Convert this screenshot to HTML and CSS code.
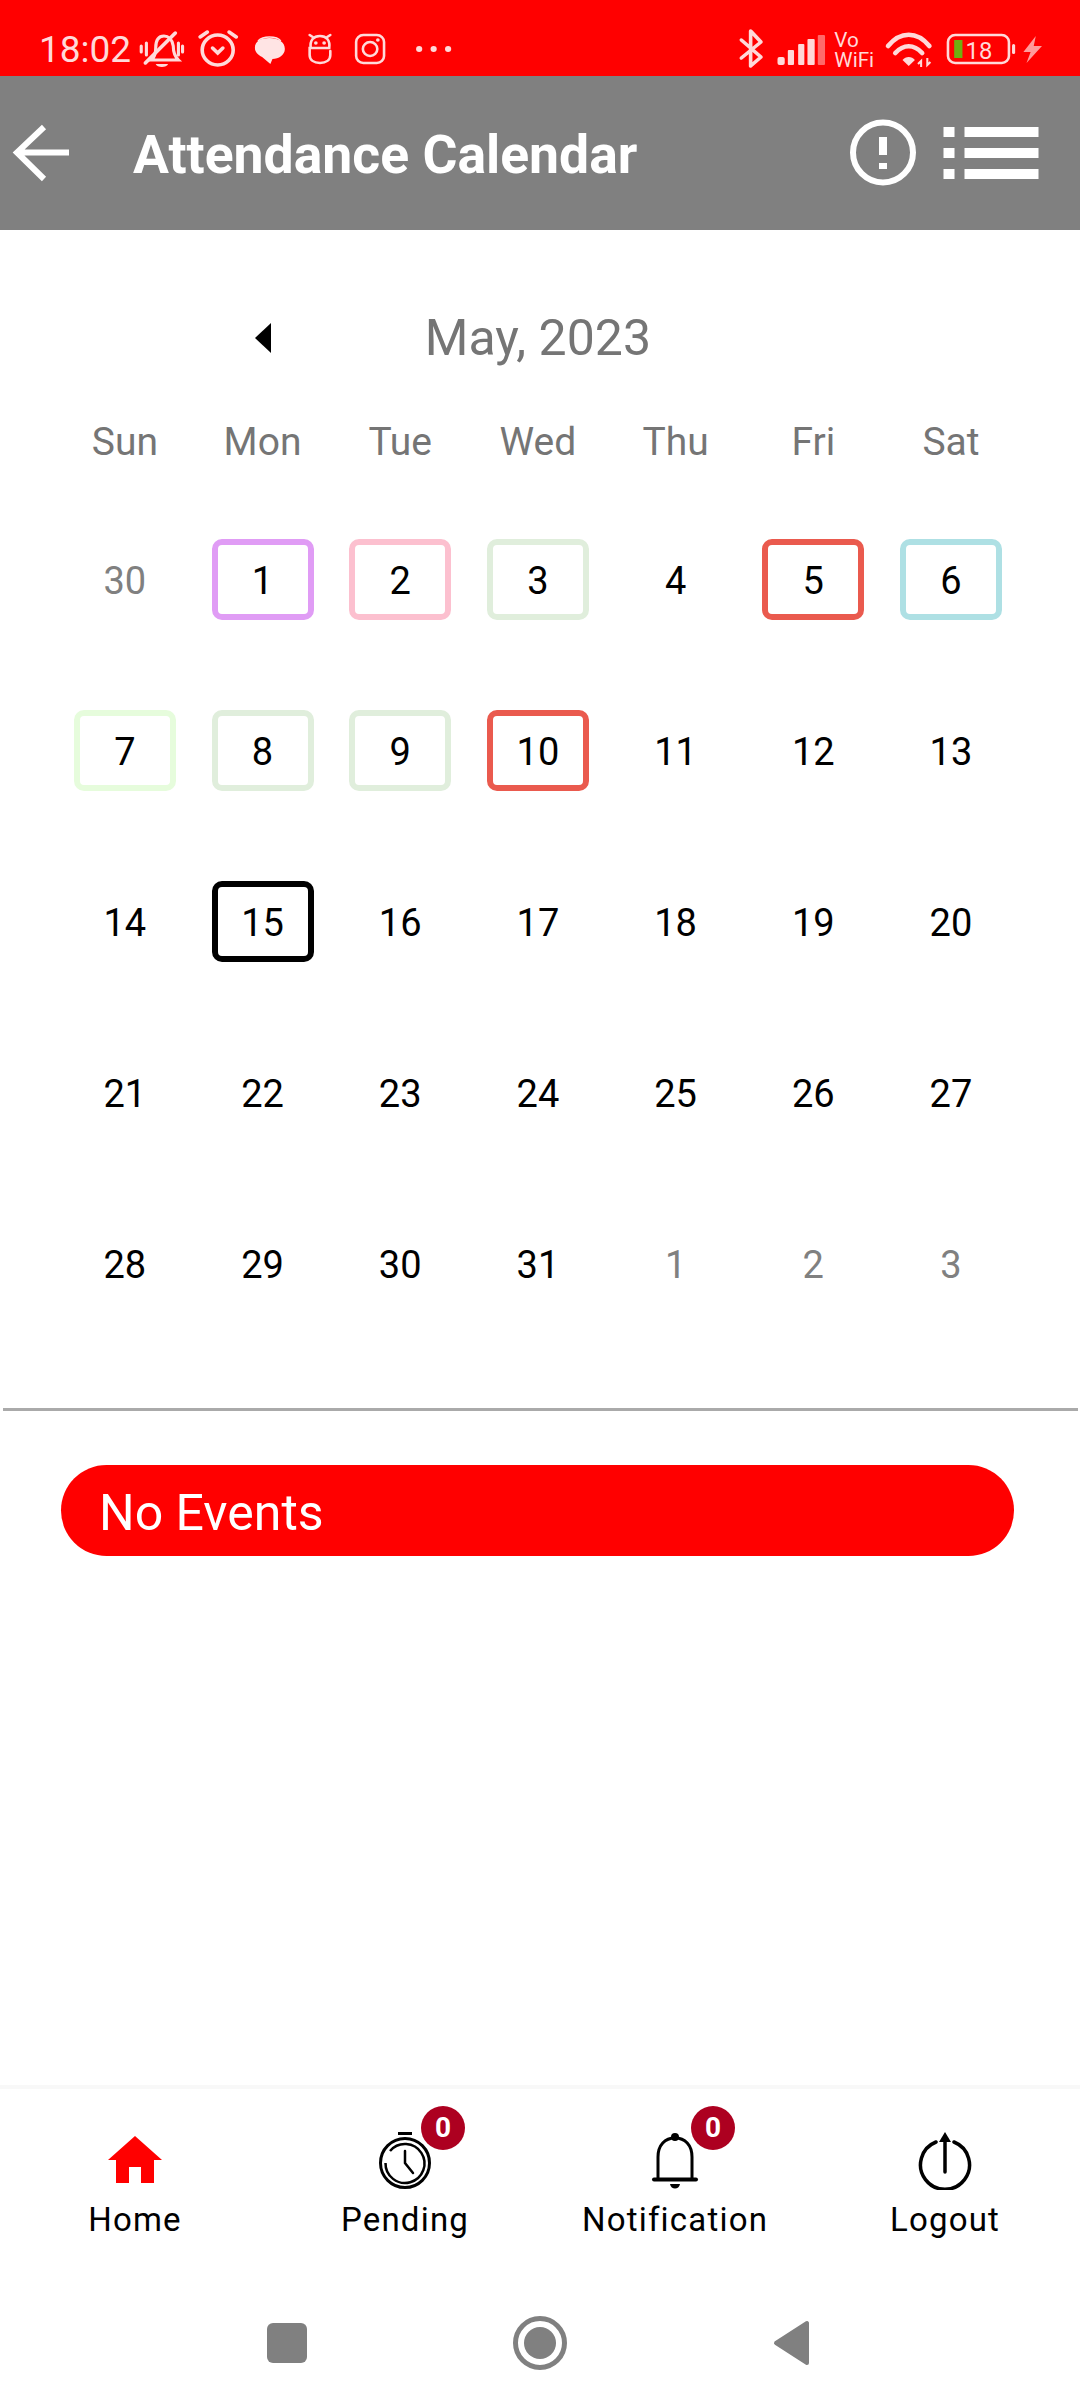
FILE: index.html
```html
<!DOCTYPE html>
<html>
<head>
<title>Attendance Calendar</title>
<meta http-equiv="Content-Type" content="text/html; charset=utf-8" />
<link rel="stylesheet" href="styles.css">
</head>
<body>
<div class="page">
	<div class="statusbar">
		<span class="time">18:02</span>
		<svg class="status-left" width="320.300" height="76" viewBox="130 0 310 76" preserveAspectRatio="none">
			<!-- muted bell -->
			<g fill="none" stroke="#ffd9d9" stroke-width="3" stroke-linecap="round">
				<path d="M147 60c3-3 4-6 4-12c0-8 3-12 8-12c4 0 8 3 9 10c0 6 1 10 5 14z"/>
				<path d="M141 63L170 33" stroke-width="3.5"/>
				<path d="M137 46v6M142 43v12M173 43v12M177 46v6"/>
			</g>
			<path d="M151 64h12c-1 4-11 4-12 0z" fill="#ffd9d9"/>
			<!-- alarm -->
			<g fill="none" stroke="#ffd9d9" stroke-width="3.5" stroke-linecap="round">
				<circle cx="211" cy="50" r="15"/>
				<path d="M194 37L201 32M229 37L222 32"/>
				<path d="M206 48l5 5l5-5"/>
			</g>
			<!-- chat -->
			<path d="M247 48c0-7 6-10 14-10c9 0 15 4 15 11c0 6-6 10-12 10l-2 5l-8-7c-4-2-7-5-7-9z" fill="#ffe4e4"/>
			<path d="M250 41c3-3 7-4 11-4c5 0 9 1 11 4" fill="none" stroke="#ffe4e4" stroke-width="1.5"/>
			<!-- robot app -->
			<g fill="none" stroke="#ffd9d9" stroke-width="2.5" stroke-linecap="round">
				<path d="M301 48c-1-8 3-12 9-12c6 0 10 4 9 12h-19v7c0 5 4 8 10 8c6 0 10-3 10-8v-4"/>
				<path d="M300 35l3 2M320 35l-3 2"/>
			</g>
			<circle cx="306" cy="43" r="1.8" fill="#ffd9d9"/>
			<circle cx="314" cy="43" r="1.8" fill="#ffd9d9"/>
			<!-- instagram -->
			<g fill="none" stroke="#ffd9d9" stroke-width="2.5">
				<rect x="345" y="35" width="27" height="28" rx="7"/>
				<circle cx="358.500" cy="49" r="7"/>
			</g>
			<circle cx="366" cy="40" r="1.8" fill="#ffd9d9"/>
			<!-- more -->
			<circle cx="406" cy="49" r="3" fill="#ffd9d9"/>
			<circle cx="420" cy="49" r="3" fill="#ffd9d9"/>
			<circle cx="434" cy="49" r="3" fill="#ffd9d9"/>
		</svg>
		<svg class="status-right" width="320.300" height="76" viewBox="725 0 310 76" preserveAspectRatio="none">
			<!-- bluetooth -->
			<path d="M735 40L754 57L744 66V31L754 42L735 58" fill="none" stroke="#ffd9d9" stroke-width="3.500" stroke-linecap="round" stroke-linejoin="round"/>
			<!-- signal -->
			<rect x="770" y="57" width="7" height="8" rx="2" fill="#ffd9d9"/>
			<rect x="780" y="50" width="6" height="15" rx="1" fill="#ffd9d9"/>
			<rect x="790" y="44" width="6" height="21" rx="1" fill="#ffd9d9"/>
			<rect x="799" y="39" width="7" height="26" rx="1" fill="#ffd9d9"/>
			<rect x="809" y="35" width="7" height="30" rx="1" fill="#ff6a6a"/>
			<!-- vowifi -->
			<text x="825" y="47" class="status-small">Vo</text>
			<text x="825" y="67" class="status-small">WiFi</text>
			<!-- wifi -->
			<g fill="none" stroke="#ffd9d9" stroke-width="4.500" stroke-linecap="round">
				<path d="M877 46C889 31 905 31 917 46"/>
				<path d="M884 53C892 44 902 44 910 53"/>
			</g>
			<path d="M891 60C894 56 900 56 903 60L897 66z" fill="#ffd9d9"/>
			<path d="M909 67v-6l-3 3M915 58v7l3-3" fill="none" stroke="#ffd9d9" stroke-width="2"/>
			<!-- battery -->
			<rect x="935" y="35" width="59" height="28" rx="7" fill="none" stroke="#ffd9d9" stroke-width="2.500"/>
			<rect x="941" y="40" width="8" height="18" fill="#6fae10"/>
			<text x="952" y="59" class="status-batt">18</text>
			<rect x="997" y="44" width="3" height="10" rx="1.500" fill="#ffd9d9"/>
			<path d="M1020 36L1008 52h7l-4 11l15-17h-8z" fill="#ff9c9c"/>
		</svg>
	</div>

	<div class="topbar">
		<svg class="back" width="60" height="60" viewBox="0 0 60 60">
			<path d="M60 29.500H9M35 4L8 29.500L35 56" fill="none" stroke="#fff" stroke-width="6"/>
		</svg>
		<div class="title">Attendance Calendar</div>
		<svg class="topbar-icons" width="190" height="70" viewBox="850 0 190 70">
			<circle cx="883" cy="34.500" r="30" fill="none" stroke="#fff" stroke-width="6"/>
			<rect x="879" y="19" width="8" height="18" fill="#fff"/>
			<rect x="879" y="45" width="8" height="6" fill="#fff"/>
			<rect x="943.500" y="9" width="11" height="10" fill="#fff"/>
			<rect x="943.500" y="30" width="11" height="10" fill="#fff"/>
			<rect x="943.500" y="51" width="11" height="10" fill="#fff"/>
			<rect x="964.500" y="9" width="74" height="10" fill="#fff"/>
			<rect x="964.500" y="30" width="74" height="10" fill="#fff"/>
			<rect x="964.500" y="51" width="74" height="10" fill="#fff"/>
		</svg>
	</div>

	<div class="calendar">
		<div class="month-row">
			<div class="month-arrow"></div>
			<div class="month-name">May, 2023</div>
		</div>
		<div class="weekdays">
			<div>Sun</div><div>Mon</div><div>Tue</div><div>Wed</div><div>Thu</div><div>Fri</div><div>Sat</div>
		</div>
		<div class="days">
			<div class="day other"><span>30</span></div>
			<div class="day"><span class="mark purple">1</span></div>
			<div class="day"><span class="mark pink">2</span></div>
			<div class="day"><span class="mark sage">3</span></div>
			<div class="day"><span>4</span></div>
			<div class="day"><span class="mark red">5</span></div>
			<div class="day"><span class="mark teal">6</span></div>

			<div class="day"><span class="mark mint">7</span></div>
			<div class="day"><span class="mark sage">8</span></div>
			<div class="day"><span class="mark sage">9</span></div>
			<div class="day"><span class="mark red">10</span></div>
			<div class="day"><span>11</span></div>
			<div class="day"><span>12</span></div>
			<div class="day"><span>13</span></div>

			<div class="day"><span>14</span></div>
			<div class="day"><span class="mark today">15</span></div>
			<div class="day"><span>16</span></div>
			<div class="day"><span>17</span></div>
			<div class="day"><span>18</span></div>
			<div class="day"><span>19</span></div>
			<div class="day"><span>20</span></div>

			<div class="day"><span>21</span></div>
			<div class="day"><span>22</span></div>
			<div class="day"><span>23</span></div>
			<div class="day"><span>24</span></div>
			<div class="day"><span>25</span></div>
			<div class="day"><span>26</span></div>
			<div class="day"><span>27</span></div>

			<div class="day"><span>28</span></div>
			<div class="day"><span>29</span></div>
			<div class="day"><span>30</span></div>
			<div class="day"><span>31</span></div>
			<div class="day other"><span>1</span></div>
			<div class="day other"><span>2</span></div>
			<div class="day other"><span>3</span></div>
		</div>
	</div>

	<div class="divider"></div>
	<div class="events">No Events</div>

	<div class="nav">
		<div class="nav-item home">
			<div class="nav-icon">
				<svg width="60" height="60" viewBox="0 0 60 60">
					<path d="M30 6L57 30H49V53H36V37H24V53H11V30H3z" fill="#f00"/>
				</svg>
			</div>
			<div class="nav-label">Home</div>
		</div>
		<div class="nav-item pending">
			<div class="nav-icon">
				<svg width="60" height="60" viewBox="0 0 60 60" fill="none" stroke="#000">
					<circle cx="30" cy="33" r="24.500" stroke-width="3"/>
					<path d="M15 21A19.500 19.500 0 1 1 10.500 33" stroke-width="2.500"/>
					<path d="M23 3.500H37" stroke-width="3"/>
					<path d="M30 21V33L38 43" stroke-width="2.500" stroke-linecap="round"/>
				</svg>
				<span class="badge">0</span>
			</div>
			<div class="nav-label">Pending</div>
		</div>
		<div class="nav-item notif">
			<div class="nav-icon">
				<svg width="60" height="60" viewBox="0 0 60 60" fill="none" stroke="#000">
					<path d="M13 49V27C13 15 20 8 30 8C40 8 47 15 47 27V49" stroke-width="3"/>
					<path d="M9 49.500H51" stroke-width="4" stroke-linecap="round"/>
					<circle cx="30" cy="7" r="4" fill="#000" stroke="none"/>
					<path d="M25 54H35C34 60 26 60 25 54z" fill="#000" stroke="none"/>
				</svg>
				<span class="badge">0</span>
			</div>
			<div class="nav-label">Notification</div>
		</div>
		<div class="nav-item logout">
			<div class="nav-icon">
				<svg width="60" height="60" viewBox="0 0 60 60" fill="none" stroke="#000">
					<path d="M21 12A24.500 24.500 0 1 0 39 12" stroke-width="3.500" stroke-linecap="round"/>
					<path d="M30 8V42" stroke-width="3.500" stroke-linecap="round"/>
					<path d="M30 2L36 12H24z" fill="#000" stroke="none"/>
				</svg>
			</div>
			<div class="nav-label">Logout</div>
		</div>
	</div>

	<div class="keys">
		<div class="key-square"></div>
		<svg width="54" height="54" viewBox="0 0 54 54">
			<circle cx="27" cy="27" r="24.500" fill="none" stroke="#808080" stroke-width="5"/>
			<circle cx="27" cy="27" r="16" fill="#808080"/>
		</svg>
		<svg width="37" height="46" viewBox="0 0 37 46">
			<path d="M3 23L34 3V43z" fill="#808080" stroke="#808080" stroke-width="4" stroke-linejoin="round"/>
		</svg>
	</div>
</div>
</body>
</html>
```

FILE: styles.css
```css
* {
	box-sizing: border-box;
}
body {
	margin: 0;
	font-family: Roboto, "Liberation Sans", sans-serif;
	background-color: #fff;
}
.page {
	width: 1080px;
	height: 2408px;
	display: flex;
	flex-direction: column;
	overflow: hidden;
}
.statusbar {
	height: 76px;
	background-color: #f00;
	display: flex;
	align-items: center;
	padding-left: 39px;
	color: #ffd9d9;
	flex: none;
}
.time {
	font-size: 37px;
	width: 95.300px;
	margin-top: 23px;
	line-height: 50px;
}
.status-right {
	margin-left: 276.600px;
}
.status-small {
	font-size: 20px;
	fill: #ffd9d9;
}
.status-batt {
	font-size: 23px;
	fill: #ffd9d9;
}
.topbar {
	height: 154px;
	background-color: #808080;
	display: flex;
	align-items: center;
	flex: none;
}
.back {
	margin-left: 9px;
}
.title {
	margin-left: 64px;
	padding-top: 3px;
	font-size: 53.500px;
	font-weight: 700;
	color: #fff;
	white-space: nowrap;
}
.topbar-icons {
	margin-left: auto;
	margin-right: 40px;
}
.calendar {
	padding: 78px 60px 0 56px;
}
.month-row,
.weekdays,
.days {
	display: grid;
	grid-template-columns: repeat(7, 137.7px);
}
.month-row {
	height: 60px;
	align-items: center;
}
.month-arrow {
	grid-column: 2;
	justify-self: center;
	width: 0;
	height: 0;
	border-top: 15px solid transparent;
	border-bottom: 15px solid transparent;
	border-right: 16px solid #000;
}
.month-name {
	grid-column: 3 / span 3;
	text-align: center;
	font-size: 50px;
	color: #757575;
}
.weekdays {
	margin-top: 49px;
	height: 50px;
	line-height: 50px;
	text-align: center;
	font-size: 39px;
	color: #757575;
}
.days {
	margin-top: 27px;
	grid-auto-rows: 171px;
}
.day {
	display: flex;
	align-items: center;
	justify-content: center;
	font-size: 38px;
	color: #000;
}
.day span {
	padding-top: 2px;
}
.day.other {
	color: #808080;
}
.day .mark {
	width: 102px;
	height: 81px;
	border: 6px solid transparent;
	border-radius: 10px;
	display: flex;
	align-items: center;
	justify-content: center;
}
.day .purple { border-color: #e09cf5; }
.day .pink { border-color: #fcc0cf; }
.day .sage { border-color: #e0eedc; }
.day .mint { border-color: #e6fcdc; }
.day .teal { border-color: #aee0e4; }
.day .red { border-color: #ea5a4e; }
.day .today { border-color: #000; }
.divider {
	height: 3px;
	background-color: #aaa;
	margin: 59px 2px 0 3px;
	flex: none;
}
.events {
	margin: 54px 66px 0 61px;
	height: 91px;
	line-height: 97px;
	padding-left: 38px;
	border-radius: 46px;
	background-color: #f00;
	color: #fff;
	font-size: 50px;
	flex: none;
}
.nav {
	margin-top: auto;
	height: 193px;
	border-top: 4px solid #f8f8f8;
	padding-top: 41px;
	display: grid;
	grid-template-columns: repeat(4, 270px);
	flex: none;
}
.nav-item {
	display: flex;
	flex-direction: column;
	align-items: center;
}
.nav-icon {
	position: relative;
	width: 60px;
	height: 60px;
}
.nav-label {
	margin-top: 11px;
	font-size: 33px;
	letter-spacing: 1.2px;
	line-height: 38px;
	color: #000;
	white-space: nowrap;
}
.badge {
	position: absolute;
	left: 46px;
	top: -24px;
	width: 44px;
	height: 44px;
	border-radius: 50%;
	background-color: #ad0020;
	color: #fff;
	font-size: 28px;
	font-weight: 700;
	line-height: 44px;
	text-align: center;
}
.keys {
	height: 130px;
	display: flex;
	align-items: center;
	gap: 206px;
	padding-left: 267px;
	flex: none;
}
.key-square {
	width: 40px;
	height: 40px;
	border-radius: 6px;
	background-color: #808080;
}
```
